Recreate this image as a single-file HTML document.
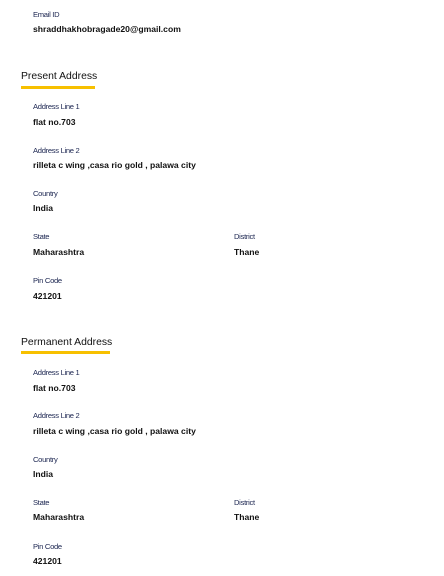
<!DOCTYPE html>
<html><head><meta charset="utf-8"><style>
body{margin:0;width:444px;height:576px;background:#fff;position:relative;overflow:hidden;font-family:"Liberation Sans",sans-serif}
.l,.v,.h{position:absolute;white-space:nowrap;line-height:1}
.l{font-size:7.6px;color:#1b2550;letter-spacing:-0.3px}
.v{font-size:8.6px;font-weight:bold;color:#111}
.h{font-size:10.4px;color:#111;left:21px}
.u{position:absolute;left:21px;height:3px;background:#f7c000}
</style></head><body>
<div class="l" style="left:33px;top:11px">Email ID</div>
<div class="v" style="left:33px;top:25px">shraddhakhobragade20@gmail.com</div>
<div class="h" style="top:72px">Present Address</div>
<div class="u" style="top:86px;width:74px"></div>
<div class="l" style="left:33px;top:103px">Address Line 1</div>
<div class="v" style="left:33px;top:118px">flat no.703</div>
<div class="l" style="left:33px;top:147px">Address Line 2</div>
<div class="v" style="left:33px;top:161px">rilleta c wing ,casa rio gold , palawa city</div>
<div class="l" style="left:33px;top:190px">Country</div>
<div class="v" style="left:33px;top:204px">India</div>
<div class="l" style="left:33px;top:233px">State</div>
<div class="v" style="left:33px;top:248px">Maharashtra</div>
<div class="l" style="left:234px;top:233px">District</div>
<div class="v" style="left:234px;top:248px">Thane</div>
<div class="l" style="left:33px;top:277px">Pin Code</div>
<div class="v" style="left:33px;top:292px">421201</div>
<div class="h" style="top:338px">Permanent Address</div>
<div class="u" style="top:351px;width:89px"></div>
<div class="l" style="left:33px;top:369px">Address Line 1</div>
<div class="v" style="left:33px;top:384px">flat no.703</div>
<div class="l" style="left:33px;top:412px">Address Line 2</div>
<div class="v" style="left:33px;top:427px">rilleta c wing ,casa rio gold , palawa city</div>
<div class="l" style="left:33px;top:456px">Country</div>
<div class="v" style="left:33px;top:470px">India</div>
<div class="l" style="left:33px;top:499px">State</div>
<div class="v" style="left:33px;top:513px">Maharashtra</div>
<div class="l" style="left:234px;top:499px">District</div>
<div class="v" style="left:234px;top:513px">Thane</div>
<div class="l" style="left:33px;top:543px">Pin Code</div>
<div class="v" style="left:33px;top:557px">421201</div>
</body></html>
